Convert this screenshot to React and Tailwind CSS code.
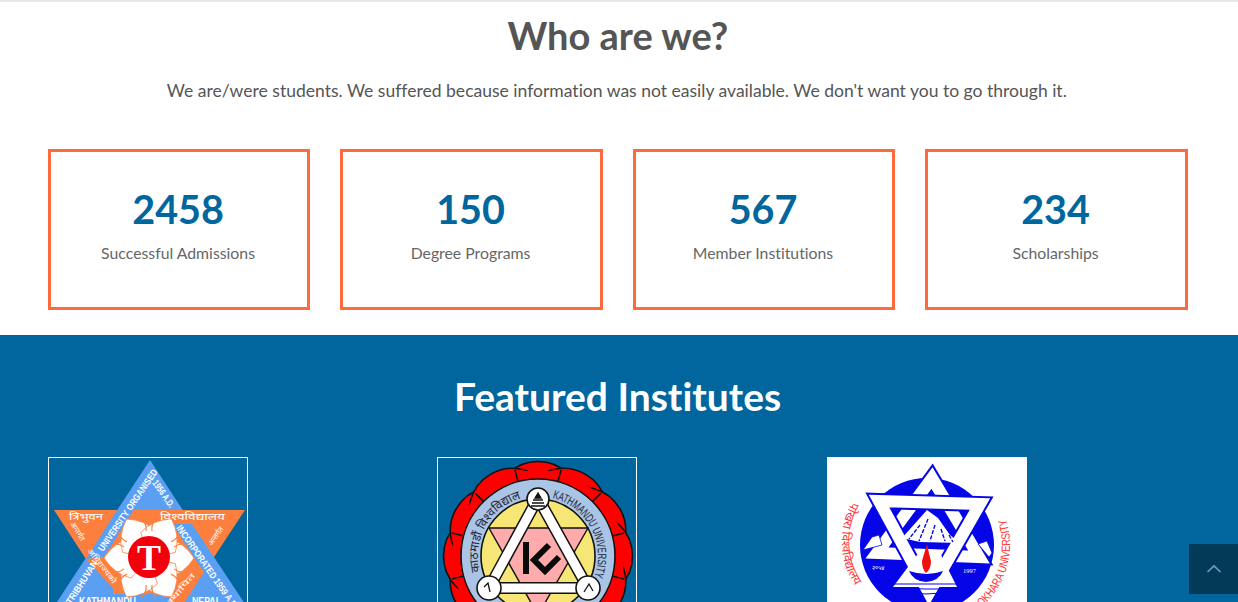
const lato = { fontFamily: 'Lato, "Noto Sans", sans-serif', fontVariantLigatures: "none" };
const stats = [
  ["2458", "Successful Admissions"],
  ["150", "Degree Programs"],
  ["567", "Member Institutions"],
  ["234", "Scholarships"],
];
const deva = '"Noto Sans", "Noto Sans Devanagari", "Liberation Sans", sans-serif';

function Tribhuvan() {
  const white = { fill: "#fff", fontFamily: '"Liberation Sans", sans-serif', fontWeight: 700 };
  const petals = [0, 60, 120, 180, 240, 300];
  return (
    <svg viewBox="0 0 198 198" className="block w-full h-full">
      <polygon points="101,2 -30,202 232,202" fill="#5b9ff2" />
      <polygon points="5,52 196,52 100,198" fill="#fd7f3e" />
      <polygon points="68,52 37,101 55,99 85,52" fill="#5b9ff2" />
      <polygon points="37,101 64,130 64,136 120,136 120,202 -10,202" fill="#5b9ff2" />
      <polygon points="123,66 143,66 200,152 180,152" fill="#5b9ff2" />
      {petals.map((a) => (
        <path key={a} d="M100 100 L118 80 Q135 84 145 100 Q135 116 118 120 Z" fill="#fff" stroke="#fd7f3e" strokeWidth="0.7" transform={`rotate(${a} 100 100)`} />
      ))}
      {[30, 90, 150, 210, 270, 330].map((a) => (
        <path key={a} d="M127 97 Q134 98 139 93 M127 103 Q134 102 139 107" fill="none" stroke="#fd7f3e" strokeWidth="1.2" transform={`rotate(${a} 100 100)`} />
      ))}
      <circle cx="100" cy="99" r="21" fill="#f2000c" />
      <text x="100" y="112" textAnchor="middle" fontSize="36" fontWeight="700" fill="#fff" fontFamily='"Liberation Serif", serif'>T</text>
      <text transform="translate(54 94) rotate(-55.5)" fontSize="9.5" style={white} textLength="97" lengthAdjust="spacingAndGlyphs">UNIVERSITY ORGANISED</text>
      <text transform="translate(103 25) rotate(55)" fontSize="9.5" style={white} textLength="31" lengthAdjust="spacingAndGlyphs">1956 A.D.</text>
      <text transform="translate(127 70) rotate(55)" fontSize="9.5" style={white} textLength="100" lengthAdjust="spacingAndGlyphs">INCORPORATED 1959 A.D.</text>
      <text transform="translate(22 147) rotate(-57)" fontSize="9.5" style={white} textLength="50" lengthAdjust="spacingAndGlyphs">TRIBHUVAN</text>
      <text x="30" y="147" fontSize="11" style={white} textLength="57" lengthAdjust="spacingAndGlyphs">KATHMANDU</text>
      <text x="143" y="147" fontSize="11" style={white} textLength="29" lengthAdjust="spacingAndGlyphs">NEPAL</text>
      <g fill="#fff" fontFamily={deva} fontSize="10">
        <text x="20" y="62" textLength="34" lengthAdjust="spacingAndGlyphs">त्रिभुवन</text>
        <text x="111" y="62" textLength="65" lengthAdjust="spacingAndGlyphs">विश्वविद्यालय</text>
        <text transform="translate(21 66) rotate(58)" fontSize="7.5">अन्तर्गत</text>
        <text transform="translate(163 88) rotate(-55)" fontSize="7.5">अन्तर्गत</text>
        <text transform="translate(38 93) rotate(52)" fontSize="7.5" textLength="42" lengthAdjust="spacingAndGlyphs">अधिराज्यको</text>
        <text transform="translate(122 147) rotate(-50)" fontSize="7.5" textLength="38" lengthAdjust="spacingAndGlyphs">स्थापित</text>
      </g>
    </svg>
  );
}

function Kathmandu() {
  const n = Array.from({ length: 12 }, (_, i) => i * 30);
  return (
    <svg viewBox="0 0 198 198" className="block w-full h-full">
      {n.map((a) => (
        <circle key={a} cx="100" cy="47" r="43.5" fill="#ff0000" stroke="#111" strokeWidth="1.6" transform={`rotate(${a} 100 98)`} />
      ))}
      <circle cx="100" cy="98" r="86" fill="#ff0000" />
      {n.map((a) => (
        <line key={a} x1="100" y1="22" x2="100" y2="9" stroke="#111" strokeWidth="1.6" transform={`rotate(${a + 15} 100 98)`} />
      ))}
      <circle cx="100" cy="98" r="77" fill="#a9c4e4" stroke="#111" strokeWidth="1.6" />
      <circle cx="100" cy="98" r="57" fill="#f6e676" stroke="#111" strokeWidth="1.6" />
      <polygon points="51,70 150,70 100,157" fill="#ffabab" stroke="#111" strokeWidth="1.4" />
      <polygon points="100,40 51,130 150,130" fill="none" stroke="#111" strokeWidth="12" strokeLinejoin="round" />
      <polygon points="100,40 51,130 150,130" fill="none" stroke="#fff" strokeWidth="9" strokeLinejoin="round" />
      <circle cx="100" cy="41" r="11" fill="#fff" stroke="#111" strokeWidth="1.6" />
      <circle cx="51" cy="130" r="12" fill="#fff" stroke="#111" strokeWidth="1.6" />
      <circle cx="150" cy="130" r="12" fill="#fff" stroke="#111" strokeWidth="1.6" />
      <path d="M100 35 L97 40 H103 Z M95 42 H105 M94 45 H106 M93 48 H107" stroke="#111" strokeWidth="1.3" fill="#111" />
      <path d="M46 129 L50 125 L52 134 M146 134 L151 126 L155 133" stroke="#111" strokeWidth="1.3" fill="none" />
      <rect x="85" y="84" width="6" height="32" fill="#0a0a0a" />
      <path d="M111 87 L96 102 L107 113 L121 99" fill="none" stroke="#0a0a0a" strokeWidth="6" />
      <path id="kuarc" d="M114.5 40 A60 60 0 0 1 156.4 118.5" fill="none" />
      <text fontSize="12" fill="#223" fontFamily='"Liberation Sans", sans-serif'>
        <textPath href="#kuarc" textLength="100" lengthAdjust="spacingAndGlyphs">KATHMANDU UNIVERSITY</textPath>
      </text>
      <path id="kuarc2" d="M42 113.5 A60 60 0 0 1 84.5 40" fill="none" />
      <text fontSize="12" fill="#223" fontFamily={deva}>
        <textPath href="#kuarc2">काठमाडौं विश्वविद्यालय</textPath>
      </text>
    </svg>
  );
}

function Pokhara() {
  return (
    <svg viewBox="0 0 200 200" className="block w-full h-full bg-white">
      <circle cx="100" cy="88" r="67" fill="#0505e8" />
      <polygon points="105,21 50,96 152,100" fill="none" stroke="#0505e8" strokeWidth="16" strokeLinejoin="miter" />
      <polygon points="105,21 50,96 152,100" fill="none" stroke="#fff" strokeWidth="12" strokeLinejoin="miter" />
      <polygon points="52,44 153,47 102,136" fill="none" stroke="#0505e8" strokeWidth="16" strokeLinejoin="miter" />
      <polygon points="52,44 153,47 102,136" fill="none" stroke="#fff" strokeWidth="12" strokeLinejoin="miter" />
      <polygon points="100,53 75,81 93,85 133,86 123,78 111,61" fill="#fff" />
      <path d="M93 68 L82 82 M101 62 L92 84 M108 68 L103 84 M114 72 L118 84 M122 78 L126 85" stroke="#0505e8" strokeWidth="1.4" fill="none" strokeDasharray="4 1.5" />
      <polygon points="36,93 45,80 52,78 55,88" fill="#fff" stroke="#0505e8" strokeWidth="0.8" />
      <polygon points="151,87 160,84 165,96 162,100" fill="#fff" stroke="#0505e8" strokeWidth="0.8" />
      <polygon points="90,98 114,98 130,130 66,130" fill="#fff" />
      <path d="M100 87 Q97 97 95 104 Q95 112 99 116 Q104 112 104 104 Q102 97 100 87Z" fill="#ee1111" />
      <path d="M82 114 Q100 120 116 114 Q112 124 99 125 Q86 124 82 114Z" fill="#0505e8" />
      <path d="M66 127 L130 127 M66 131 L99 132 L130 132 M67 135 L99 137 L130 135" stroke="#0505e8" strokeWidth="1.2" fill="none" />
      <text x="45" y="113" fontSize="6" fill="#fff" fontFamily={deva}>२०५४</text>
      <text x="136" y="116" fontSize="6.5" fill="#fff" fontFamily='"Liberation Serif", serif'>1997</text>
      <path id="puarc" d="M150 154 A83 83 0 0 0 179 62" fill="none" />
      <text fontSize="12" fill="#f33" fontFamily='"Liberation Sans", sans-serif'>
        <textPath href="#puarc" textLength="103" lengthAdjust="spacingAndGlyphs">POKHARA UNIVERSITY</textPath>
      </text>
      <path id="puarc2" d="M25 45 A80 80 0 0 0 49 150" fill="none" />
      <text fontSize="12" fill="#f33" fontFamily={deva}>
        <textPath href="#puarc2">पोखरा विश्वविद्यालय</textPath>
      </text>
    </svg>
  );
}

function Logo({ children, framed }) {
  return (
    <div className={`w-[200px] h-[200px] ${framed ? "border border-white" : ""}`}>{children}</div>
  );
}

export default function App() {
  return (
    <div className="h-[602px] overflow-hidden relative bg-white" style={lato}>
      <div className="h-[2px] bg-[#e7e7e7]" />
      <section className="pl-[47.8px] pr-[50.2px] h-[333px]">
        <h2 className="text-center text-[38px] leading-[42px] font-bold text-[#555] pt-[12px] h-[56px] box-content pb-0">Who are we?</h2>
        <p className="text-center text-[17.55px] leading-[26px] text-[#555] mt-[8px] pr-[2px]">
          We are/were students. We suffered because information was not easily available. We don't want you to go through it.
        </p>
        <div className="grid grid-cols-4 gap-[30px] mt-[45px]">
          {stats.map(([n, l]) => (
            <div key={l} className="h-[161px] border-[3px] border-[#ff6a3c] flex flex-col items-center pt-[32px] pr-[2px]">
              <div className="text-[39.5px] leading-[50px] font-bold text-[#00669e]">{n}</div>
              <div className="text-[15.8px] leading-[24px] text-[#666] mt-[7px]">{l}</div>
            </div>
          ))}
        </div>
      </section>
      <section className="bg-[#00669d] h-[267px] pl-[48px] pr-[50px]">
        <h2 className="text-center text-[39px] leading-[46px] font-bold text-white pt-[38px] pr-[1px] box-content">Featured Institutes</h2>
        <div className="grid grid-cols-[389px_390px_200px] mt-[38px]">
          <Logo framed><Tribhuvan /></Logo>
          <Logo framed><Kathmandu /></Logo>
          <Logo><Pokhara /></Logo>
        </div>
      </section>
      <div className="absolute right-0 top-[544px] w-[49px] h-[50px] bg-[#033a58] flex items-center justify-center">
        <svg width="16" height="10" viewBox="0 0 16 10" fill="none" stroke="#5fa6cc" strokeWidth="1.6">
          <path d="M1.5 8 L8 1.8 L14.5 8" />
        </svg>
      </div>
    </div>
  );
}
